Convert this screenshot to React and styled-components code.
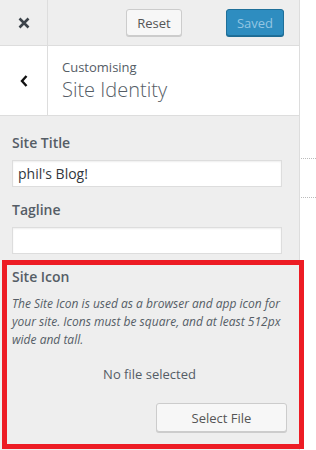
import React from "react";
import styled, { createGlobalStyle } from "styled-components";

const Global = createGlobalStyle`
  html, body { margin: 0; padding: 0; background: #fff; }
  body { font-family: "Open Sans", "Noto Sans", sans-serif; color: #555d66; }
  * { box-sizing: border-box; }
`;

const Page = styled.div`
  position: relative;
  display: flex;
  width: 316px;
  height: 450px;
  overflow: hidden;
`;

const Sidebar = styled.div`
  width: 300px;
  flex: none;
  background: #eee;
  border-right: 1px solid #ddd;
  display: flex;
  flex-direction: column;
`;

const TopBar = styled.div`
  height: 46px;
  display: flex;
  align-items: center;
  border-bottom: 1px solid #ddd;
  background: #eee;
`;

const IconCell = styled.div`
  width: 48px;
  align-self: stretch;
  display: flex;
  align-items: center;
  justify-content: center;
  border-right: 1px solid #ddd;
  color: ${(p) => p.$color || "#555d66"};
`;

const Actions = styled.div`
  flex: 1;
  display: flex;
  justify-content: flex-end;
  align-items: center;
  gap: 44px;
  padding-right: 15px;
`;

const Button = styled.button`
  font-family: "Open Sans", "Noto Sans", sans-serif;
  font-size: 13px;
  height: ${(p) => p.$h || 27}px;
  width: ${(p) => p.$w}px;
  padding: 0;
  border-radius: 3px;
  border: 1px solid ${(p) => (p.$primary ? "#1f6f99" : "#ccc")};
  background: ${(p) => (p.$primary ? "#2e8dc0" : "#f7f7f7")};
  color: ${(p) => (p.$primary ? "#93c6e3" : "#555")};
  box-shadow: 0 1px 0 ${(p) => (p.$primary ? "#1d6b94" : "#ccc")};
  cursor: pointer;
`;

const Header = styled.div`
  height: 70px;
  display: flex;
  background: #fff;
  border-bottom: 1px solid #ddd;
`;

const HeaderText = styled.div`
  padding: 12px 0 0 14px;
  display: flex;
  flex-direction: column;
`;

const Kicker = styled.span`
  font-size: 13px;
  line-height: 18px;
  color: #555d66;
`;

const Title = styled.span`
  font-size: 20px;
  font-weight: 300;
  line-height: 30px;
  color: #555d66;
  margin-top: -1px;
`;

const Content = styled.div`
  padding: 17px 12px 0 12px;
  display: flex;
  flex-direction: column;
`;

const Label = styled.div`
  font-size: 14px;
  font-weight: 600;
  line-height: 20px;
  color: #555d66;
  margin-top: ${(p) => p.$mt || 0}px;
`;

const Input = styled.input`
  width: 270px;
  height: 27px;
  margin-top: 7px;
  border: 1px solid #ddd;
  box-shadow: inset 0 1px 2px rgba(0, 0, 0, 0.07);
  background: #fff;
  font-family: "Open Sans", "Noto Sans", sans-serif;
  font-size: 14px;
  color: #32373c;
  padding: 0 5px;
  outline: none;
`;

const Description = styled.p`
  margin: 8px 0 0 0;
  font-size: 12px;
  font-style: italic;
  line-height: 18px;
  color: #555d66;
`;

const Empty = styled.div`
  margin-top: 15px;
  text-align: center;
  font-size: 13px;
  line-height: 20px;
  color: #555d66;
`;

const ButtonRow = styled.div`
  display: flex;
  justify-content: flex-end;
  margin-top: 19px;
`;

const Preview = styled.div`
  flex: 1;
  padding-top: 158px;
  display: flex;
  flex-direction: column;
`;

const Dotted = styled.div`
  margin-left: 1px;
  border-top: 1px dotted #bbb;
  margin-top: ${(p) => p.$mt || 0}px;
`;

const Highlight = styled.div`
  position: absolute;
  left: 2px;
  top: 260px;
  width: 302px;
  height: 189px;
  border: 5px solid #ed1c24;
  pointer-events: none;
`;

export default function App() {
  return (
    <>
      <Global />
      <Page>
        <Sidebar>
          <TopBar>
            <IconCell>
              <svg width="14" height="14" viewBox="0 0 14 14">
                <path d="M2.5 2.5 L11.5 11.5 M11.5 2.5 L2.5 11.5" stroke="#3c434a" strokeWidth="2.6" strokeLinecap="butt" />
              </svg>
            </IconCell>
            <Actions>
              <Button $w={56}>Reset</Button>
              <Button $w={58} $primary>Saved</Button>
            </Actions>
          </TopBar>
          <Header>
            <IconCell>
              <svg width="10" height="14" viewBox="0 0 10 14">
                <path d="M7.5 2 L3 7 L7.5 12" fill="none" stroke="#111" strokeWidth="2.4" />
              </svg>
            </IconCell>
            <HeaderText>
              <Kicker>Customising</Kicker>
              <Title>Site Identity</Title>
            </HeaderText>
          </Header>
          <Content>
            <Label>Site Title</Label>
            <Input defaultValue="phil's Blog!" />
            <Label $mt={13}>Tagline</Label>
            <Input defaultValue="" />
            <Label $mt={13}>Site Icon</Label>
            <Description>
              The Site Icon is used as a browser and app icon for your site. Icons must be square, and at least 512px wide and tall.
            </Description>
            <Empty>No file selected</Empty>
            <ButtonRow>
              <Button $w={131} $h={29}>Select File</Button>
            </ButtonRow>
          </Content>
        </Sidebar>
        <Preview>
          <Dotted />
          <Dotted $mt={38} />
        </Preview>
        <Highlight />
      </Page>
    </>
  );
}
